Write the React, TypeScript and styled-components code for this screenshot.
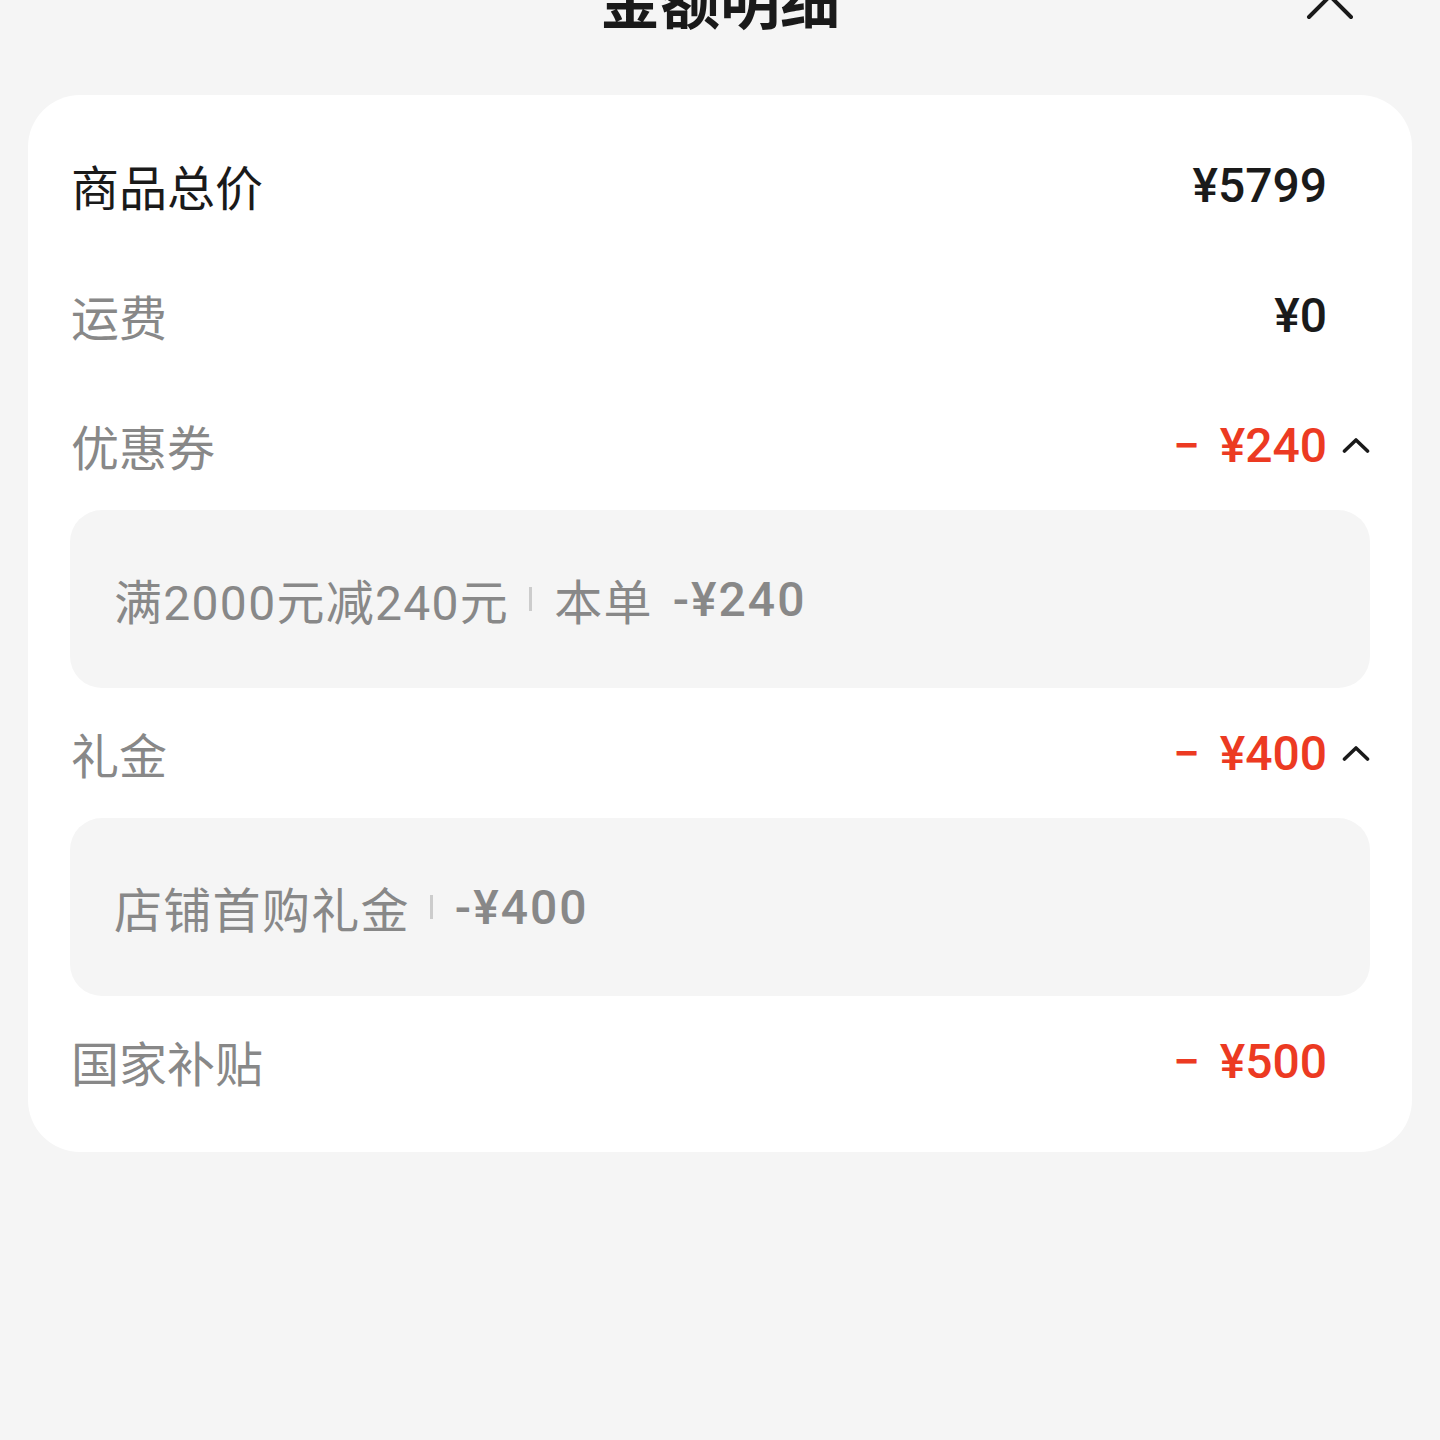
import React from "react";
import styled, { createGlobalStyle } from "styled-components";

const GlobalStyle = createGlobalStyle`
  html, body {
    margin: 0;
    padding: 0;
    background: #f5f5f5;
    overflow: hidden;
  }
  body {
    font-family: Roboto, "Noto Sans CJK SC", sans-serif;
    -webkit-font-smoothing: antialiased;
  }
`;

const Page = styled.div`
  width: 1440px;
  height: 1440px;
  background: #f5f5f5;
  display: flex;
  flex-direction: column;
`;

const Header = styled.header`
  margin-top: -62px;
  height: 120px;
  display: grid;
  grid-template-columns: 1fr auto 1fr;
  align-items: center;
`;

const Title = styled.h1`
  grid-column: 2;
  margin: 0;
  font-size: 60px;
  line-height: 1;
  font-weight: 700;
  color: #1a1a1a;
  font-family: "Noto Sans CJK SC", sans-serif;
`;

const CloseButton = styled.button`
  grid-column: 3;
  justify-self: end;
  margin-right: 86px;
  margin-top: -4px;
  width: 48px;
  height: 48px;
  padding: 0;
  border: none;
  background: transparent;
  display: flex;
  align-items: center;
  justify-content: center;
`;

const Card = styled.section`
  margin: 37px 28px 0;
  background: #ffffff;
  border-radius: 52px;
  padding: 25px 42px 26px;
  display: flex;
  flex-direction: column;
`;

const Row = styled.div`
  height: 130px;
  display: flex;
  align-items: center;
`;

const Label = styled.span<{ $strong?: boolean }>`
  flex: 1;
  padding-left: 1px;
  font-family: "Noto Sans CJK SC", sans-serif;
  font-size: 48px;
  color: ${(p) => (p.$strong ? "#1a1a1a" : "#888888")};
`;

const Value = styled.span<{ $red?: boolean }>`
  font-family: Roboto, "Noto Sans CJK SC", sans-serif;
  font-size: 48px;
  font-weight: 500;
  color: ${(p) => (p.$red ? "#ec3a22" : "#1a1a1a")};
  display: flex;
  align-items: center;
`;

const Minus = styled.span`
  font-weight: 500;
  margin-right: 20px;
`;

const ChevronSlot = styled.span`
  width: 43px;
  display: flex;
  justify-content: flex-end;
  align-items: center;
`;

const DetailBox = styled.div`
  height: 178px;
  background: #f5f5f5;
  border-radius: 32px;
  padding-left: 44px;
  display: flex;
  align-items: center;
  font-size: 48px;
  letter-spacing: 1.3px;
  color: #888888;
  font-family: Roboto, "Noto Sans CJK SC", sans-serif;
`;

const Separator = styled.span`
  width: 3px;
  height: 24px;
  background: #cccccc;
  margin: 0 22px 0 20px;
`;

const Amount = styled.span<{ $gap?: number }>`
  margin-left: ${(p) => p.$gap ?? 0}px;
  font-weight: 500;
  letter-spacing: 2px;
`;

const Chevron = () => (
  <svg width="28" height="18" viewBox="0 0 28 18">
    <path d="M2.5 15 L14 4 L25.5 15" fill="none" stroke="#1a1a1a" strokeWidth="3.6" strokeLinecap="round" strokeLinejoin="round" />
  </svg>
);

const CloseIcon = () => (
  <svg width="48" height="48" viewBox="0 0 48 48">
    <path d="M3 3 L45 45 M45 3 L3 45" fill="none" stroke="#1a1a1a" strokeWidth="4" strokeLinecap="round" />
  </svg>
);

export default function App() {
  return (
    <>
      <GlobalStyle />
      <Page>
        <Header>
          <Title>金额明细</Title>
          <CloseButton aria-label="关闭">
            <CloseIcon />
          </CloseButton>
        </Header>
        <Card>
          <Row>
            <Label $strong>商品总价</Label>
            <Value>¥5799</Value>
            <ChevronSlot />
          </Row>
          <Row>
            <Label>运费</Label>
            <Value>¥0</Value>
            <ChevronSlot />
          </Row>
          <Row>
            <Label>优惠券</Label>
            <Value $red>
              <Minus>−</Minus>¥240
            </Value>
            <ChevronSlot>
              <Chevron />
            </ChevronSlot>
          </Row>
          <DetailBox>
            满2000元减240元
            <Separator />
            本单
            <Amount $gap={20}>-¥240</Amount>
          </DetailBox>
          <Row>
            <Label>礼金</Label>
            <Value $red>
              <Minus>−</Minus>¥400
            </Value>
            <ChevronSlot>
              <Chevron />
            </ChevronSlot>
          </Row>
          <DetailBox>
            店铺首购礼金
            <Separator />
            <Amount>-¥400</Amount>
          </DetailBox>
          <Row>
            <Label>国家补贴</Label>
            <Value $red>
              <Minus>−</Minus>¥500
            </Value>
            <ChevronSlot />
          </Row>
        </Card>
      </Page>
    </>
  );
}
